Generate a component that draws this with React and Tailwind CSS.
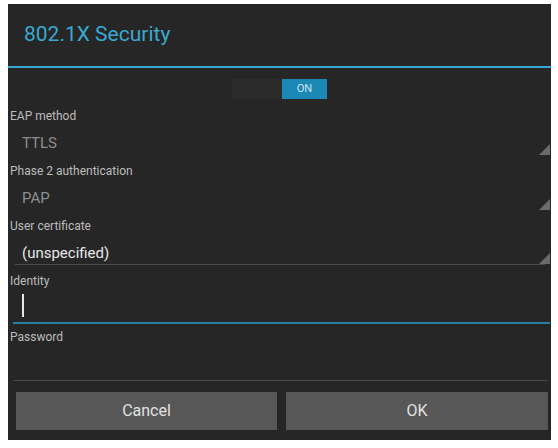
import React from 'react';

const Triangle = () => (
    <svg className="absolute right-[-5px] bottom-[0px]" width="11" height="11" viewBox="0 0 11 11">
        <polygon points="11,0 11,11 0,11" fill="#6b6b6b" />
    </svg>
);

const Spinner = ({ label, value, bright, underline }) => (
    <div className="h-[55px]">
        <div className="h-[18px] pl-[2px] text-[12px] leading-[18px] text-[#bcbcbc]">{label}</div>
        <div className="h-[37px] pt-[7px] pl-[7px] pr-[6px]">
            <div
                className={
                    'relative h-[23px] pl-[7px] flex items-center text-[15px] ' +
                    (bright ? 'text-[#e8e8e8] ' : 'text-[#8e8e8e] ') +
                    (underline ? 'border-b border-[#4a4a4a]' : '')
                }
            >
                {value}
                <Triangle />
            </div>
        </div>
    </div>
);

export default function App() {
    return (
        <div className="w-[558px] h-[448px] bg-white pt-[4px] pl-[8px]" style={{ fontFamily: 'Roboto, "Liberation Sans", sans-serif' }}>
            <div className="w-[543px] h-[436px] bg-[#262626] flex flex-col">
                {/* Header */}
                <div className="h-[62px] flex items-center pl-[16px] text-[21px] text-[#3aa9cf]">802.1X Security</div>
                <div className="h-[2px] bg-[#33a6d3]"></div>

                {/* Toggle */}
                <div className="mt-[11px] flex justify-center">
                    <div className="w-[50px] h-[20px] bg-[#2b2b2b]"></div>
                    <div className="w-[45px] h-[20px] bg-[#1b88b5] flex items-center justify-center text-[11px] text-[#cfe6f0]">ON</div>
                </div>

                {/* Fields */}
                <div className="mt-[8px]">
                    <Spinner label="EAP method" value="TTLS" />
                    <Spinner label="Phase 2 authentication" value="PAP" />
                    <Spinner label="User certificate" value="(unspecified)" bright underline />
                </div>

                {/* Identity */}
                <div className="h-[18px] pl-[2px] text-[12px] leading-[18px] text-[#bcbcbc]">Identity</div>
                <div className="h-[34px] ml-[5px] mr-[1px] border-b-2 border-[#2a7ea3] pl-[9px] pt-[4px]">
                    <div className="w-[2px] h-[23px] bg-[#e6e6e6]"></div>
                </div>

                {/* Password */}
                <div className="mt-[4px] h-[18px] pl-[2px] text-[12px] leading-[18px] text-[#bcbcbc]">Password</div>
                <div className="h-[35px] ml-[6px] mr-[3px] border-b border-[#4a4a4a]"></div>

                {/* Buttons */}
                <div className="mt-[11px] flex gap-[9px] pl-[8px]">
                    <button className="w-[261px] h-[38px] bg-[#575757] text-[16px] text-[#e2e2e2]">Cancel</button>
                    <button className="w-[262px] h-[38px] bg-[#575757] text-[16px] text-[#e2e2e2]">OK</button>
                </div>
            </div>
        </div>
    );
}
